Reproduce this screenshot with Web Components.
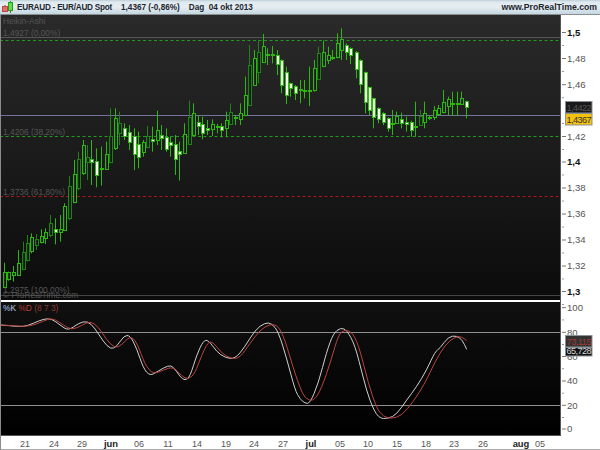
<!DOCTYPE html>
<html>
<head>
<meta charset="utf-8">
<title>EURAUD</title>
<style>
html, body { margin: 0; padding: 0; background: #fff; }
</style>
</head>
<body>
<chart-window></chart-window>
<script>
const SVGNS = 'http://www.w3.org/2000/svg';
const FONT = '"Liberation Sans", Arial, sans-serif';

// [x, wickTop, bodyTop, bodyBottom, wickBottom, kind] in units of 1/3 px
// kind: 0 hollow, 1 white, 2 dim hollow
const CANDLES = [
  [12,788,815,860,862,0],[26,815,817,838,842,0],[39,798,817,826,845,0],[54,750,788,823,825,0],
  [69,725,755,805,808,2],[82,705,730,780,785,2],[95,700,712,755,760,0],[108,702,718,735,750,2],
  [123,688,707,725,730,0],[137,685,697,715,732,0],[152,645,670,707,712,2],[165,655,688,698,733,1],
  [180,645,687,695,725,0],[192,610,618,690,692,0],[207,528,558,655,660,2],[222,480,522,607,610,0],
  [234,455,478,565,570,2],[249,420,435,520,525,0],[262,435,470,485,540,2],[275,420,478,488,555,1],
  [289,445,482,525,562,1],[304,440,505,508,557,0],[318,425,462,508,510,0],[332,325,408,485,490,2],
  [345,325,355,445,450,0],[358,335,370,400,435,2],[372,370,385,408,420,1],[387,375,395,425,450,1],
  [402,385,408,462,510,1],[415,395,432,472,505,1],[429,420,425,455,470,0],[441,378,408,440,445,2],
  [456,380,418,425,455,1],[471,332,390,420,435,0],[485,375,405,415,450,1],[498,385,410,445,455,1],
  [512,410,427,437,470,1],[525,405,432,478,525,1],[538,425,453,463,542,1],[553,370,403,460,462,0],
  [567,302,350,430,432,2],[581,310,340,405,408,0],[595,345,365,378,405,1],[608,350,372,400,418,1],
  [622,360,385,390,405,1],[637,358,372,388,408,0],[651,372,378,382,400,1],[665,370,378,390,412,1],
  [678,335,360,385,412,0],[692,310,335,372,375,2],[706,345,350,354,375,1],[720,310,338,355,375,0],
  [735,230,285,345,348,0],[749,135,195,315,318,2],[763,150,175,255,258,0],[775,120,155,215,250,2],
  [789,102,138,185,187,0],[803,145,161,164,195,1],[817,138,162,165,190,0],[831,150,165,192,225,1],
  [845,178,180,255,280,1],[858,200,215,285,312,1],[872,248,250,265,290,1],[886,255,258,278,300,1],
  [900,240,268,272,310,1],[914,240,271,273,295,0],[928,200,270,272,318,0],[942,180,205,272,275,0],
  [955,140,160,238,240,2],[969,122,157,200,202,0],[984,140,165,180,192,0],[997,150,171,174,180,0],
  [1011,100,130,172,175,0],[1025,85,118,152,180,0],[1038,130,135,155,180,1],[1052,142,145,165,192,1],
  [1068,153,155,207,235,1],[1081,178,180,252,280,1],[1095,215,217,307,340,1],[1108,260,262,332,345,1],
  [1121,293,295,352,385,1],[1135,322,325,357,370,1],[1150,337,340,368,375,1],[1164,352,355,385,395,1],
  [1178,330,368,372,405,0],[1190,335,347,368,370,0],[1204,338,357,368,385,1],[1218,350,365,370,395,1],
  [1233,362,365,388,410,1],[1247,305,377,379,410,0],[1260,330,348,375,377,2],[1274,305,338,365,385,0],
  [1288,348,350,352,360,0],[1302,318,330,352,360,0],[1316,315,325,342,345,0],[1330,270,305,335,340,0],
  [1344,290,298,320,345,0],[1358,275,309,311,348,0],[1372,275,310,314,348,1],[1385,275,295,312,314,0],
  [1400,302,304,322,355,1]
];

// oscillator points, x and y in 1/3 px from (0, 295)
const K_LINE = [[0,90],[30,92],[70,96],[100,85],[130,72],[155,71],[180,90],[205,107],[235,85],[262,77],[285,100],[310,140],[332,163],[350,155],[372,122],[390,121],[410,160],[430,220],[450,243],[475,228],[505,211],[520,215],[540,245],[555,257],[570,245],[590,180],[610,137],[625,135],[650,170],[675,188],[705,192],[735,155],[765,105],[795,83],[815,85],[835,110],[860,190],[885,285],[900,312],[915,325],[930,325],[955,265],[980,170],[1000,115],[1022,98],[1040,105],[1065,150],[1090,250],[1110,320],[1135,370],[1165,371],[1190,358],[1220,315],[1250,275],[1280,225],[1305,170],[1320,160],[1345,125],[1370,122],[1387,135],[1400,163]];
const D_LINE = [[0,90],[40,92],[75,95],[110,88],[145,71],[165,73],[190,90],[215,105],[245,92],[270,78],[295,95],[320,135],[345,160],[365,150],[390,123],[410,140],[435,210],[460,238],[490,225],[520,215],[545,243],[565,254],[585,235],[605,180],[625,140],[640,142],[665,175],[695,192],[720,188],[750,145],[780,105],[810,87],[835,92],[855,135],[880,220],[900,278],[915,310],[940,320],[965,280],[995,190],[1015,120],[1035,102],[1060,115],[1080,165],[1105,265],[1130,340],[1150,365],[1175,371],[1205,362],[1240,320],[1275,265],[1305,200],[1335,150],[1365,125],[1385,125],[1400,137]];

function el(parent, name, attrs, text) {
  const n = document.createElementNS(SVGNS, name);
  for (const k in attrs) n.setAttribute(k, attrs[k]);
  if (text !== undefined) n.textContent = text;
  parent.appendChild(n);
  return n;
}

class TitleBar extends HTMLElement {
  constructor() {
    super();
    this.attachShadow({mode: 'open'}).innerHTML = `
<style>
:host {
  display: flex;
  align-items: center;
  height: 15px;
  box-sizing: border-box;
  padding: 0 3px 0 2px;
  border-bottom: 1px solid #8a8f92;
  background: linear-gradient(#bccfda 0, #dfe9ee 2px, #e6eef2 7px, #c4d6e0 14px);
  font: bold 8.2px ${FONT};
  color: #1c2630;
  white-space: pre;
}
svg { flex: none; margin-right: 3px; }
.name { letter-spacing: -.24px; }
.quote { margin-left: 9px; }
.date { margin-left: 9px; }
.site { margin-left: auto; font-size: 8.7px; }
</style>
<svg width="12" height="12" viewBox="0 0 12 12">
  <path d="M3 4V11" stroke="#a33" stroke-width="1"/>
  <rect x=".5" y="5.5" width="5" height="5" fill="#e0706c" stroke="#b44"/>
  <path d="M8.5 0V12" stroke="#2a8a20" stroke-width="1"/>
  <rect x="6.5" y="1.5" width="4" height="8" fill="#5fe04a" stroke="#2a9a20"/>
</svg>
<span class="name"><slot name="name"></slot></span>
<span class="quote"><slot name="quote"></slot></span>
<span class="date"><slot name="date"></slot></span>
<span class="site"><slot name="site"></slot></span>`;
  }
}
customElements.define('title-bar', TitleBar);

class PricePanel extends HTMLElement {
  constructor() {
    super();
    this.attachShadow({mode: 'open'}).innerHTML = `
<style>
:host { display: block; height: 285px; overflow: hidden; border-left: 1px solid #8b8b8b; box-sizing: border-box; background: linear-gradient(#2a2a2a, #0b0b0b); }
svg { display: block; }
text { font: 8.4px ${FONT}; fill: #555; }
</style>
<svg width="560" height="285" viewBox="0 0 560 285"></svg>`;
  }
  connectedCallback() {
    const svg = this.shadowRoot.querySelector('svg');
    const g = el(svg, 'g', {transform: 'translate(-1,-15)'});
    el(g, 'line', {x1: 0, x2: 561, y1: 37.5, y2: 37.5, stroke: '#555', 'stroke-width': 1});
    el(g, 'line', {x1: 0, x2: 561, y1: 295.5, y2: 295.5, stroke: '#444', 'stroke-width': 1});
    for (const [y, c] of [[40.5, '#1f9a1f'], [136.5, '#1f9a1f'], [196.5, '#a81818']]) {
      el(g, 'line', {x1: 0, x2: 561, y1: y, y2: y, stroke: c, 'stroke-width': 1, 'stroke-dasharray': '3 2.5'});
    }
    el(g, 'line', {x1: 0, x2: 561, y1: 115.5, y2: 115.5, stroke: '#72729a', 'stroke-width': 1});
    el(g, 'text', {x: 3, y: 24}, 'Heikin-Ashi');
    el(g, 'text', {x: 3, y: 36}, '1,4927 (0,00%)');
    el(g, 'text', {x: 3, y: 135}, '1,4206 (38,20%)');
    el(g, 'text', {x: 3, y: 195}, '1,3736 (61,80%)');
    el(g, 'text', {x: 3, y: 293}, '1,2975 (100,00%)');
    el(g, 'text', {x: 3, y: 298}, '© ProRealTime.com');
    for (const [x, wt, bt, bb, wb, kind] of CANDLES) {
      const n = Math.round(x / 3 - .5);
      const color = kind === 2 ? '#1f8214' : '#2cb80c';
      const top = Math.round(bt / 3) + .5;
      const h = Math.max(Math.round((bb - bt) / 3), 1);
      el(g, 'line', {x1: n + .5, x2: n + .5, y1: wt / 3, y2: wb / 3, stroke: color, 'stroke-width': 1});
      el(g, 'rect', {
        x: n - .5, y: top, width: 3, height: h,
        fill: kind === 1 ? '#f4ffec' : '#141614', 'fill-opacity': kind === 1 ? 1 : .8,
        stroke: color, 'stroke-width': 1
      });
    }
  }
}
customElements.define('price-panel', PricePanel);

function smooth(points) {
  const p = points.map(([x, y]) => [x / 3, 295 + y / 3]);
  let d = `M${p[0][0]} ${p[0][1]}`;
  for (let i = 1; i < p.length - 1; i++) {
    const mx = (p[i][0] + p[i + 1][0]) / 2, my = (p[i][1] + p[i + 1][1]) / 2;
    d += `Q${p[i][0]} ${p[i][1]} ${mx} ${my}`;
  }
  const last = p[p.length - 1];
  return d + `L${last[0]} ${last[1]}`;
}

class OscPanel extends HTMLElement {
  constructor() {
    super();
    this.attachShadow({mode: 'open'}).innerHTML = `
<style>
:host { display: block; height: 133px; overflow: hidden; border-left: 1px solid #8b8b8b; box-sizing: border-box; background: linear-gradient(#101010, #000); }
svg { display: block; }
text { font: 8.4px ${FONT}; }
</style>
<svg width="560" height="133" viewBox="0 0 560 133"></svg>`;
  }
  connectedCallback() {
    const svg = this.shadowRoot.querySelector('svg');
    const g = el(svg, 'g', {transform: 'translate(-1,-302)'});
    for (const y of [332.5, 405.5]) {
      el(g, 'line', {x1: 0, x2: 561, y1: y, y2: y, stroke: '#8f8f8f', 'stroke-width': 1});
    }
    const t = el(g, 'text', {x: 3, y: 310.5});
    el(t, 'tspan', {fill: '#b9c8e8'}, '%K ');
    el(t, 'tspan', {fill: '#b03c36'}, '%D');
    el(t, 'tspan', {fill: '#8a3a36'}, ' (8 7 3)');
    el(g, 'path', {d: smooth(K_LINE), fill: 'none', stroke: '#cfcfcf', 'stroke-width': 1});
    el(g, 'path', {d: smooth(D_LINE), fill: 'none', stroke: '#b8443c', 'stroke-width': 1});
  }
}
customElements.define('osc-panel', OscPanel);

class RightAxis extends HTMLElement {
  constructor() {
    super();
    this.attachShadow({mode: 'open'}).innerHTML = `
<style>
:host { display: block; background: #fff; border-left: 1px solid #555; box-sizing: border-box; height: 420px; }
svg { display: block; }
text { font: 9.6px ${FONT}; fill: #555; }
.b { font-weight: bold; fill: #111; }
</style>
<svg width="40" height="420" viewBox="0 0 40 420"></svg>`;
  }
  connectedCallback() {
    const svg = this.shadowRoot.querySelector('svg');
    const g = el(svg, 'g', {transform: 'translate(-560,-15)'});
    const label = (y, s, bold) => {
      el(g, 'line', {x1: 561, x2: 565, y1: y, y2: y, stroke: '#777'});
      el(g, 'text', {x: 566, y: y + 3.4, class: bold ? 'b' : ''}, s);
    };
    const prices = [[32.5, '1,5', 1], [58.5, '1,48'], [84.7, '1,46'], [110.5, ''], [136.5, '1,42'], [162, '1,4', 1], [188, '1,38'], [214, '1,36'], [240, '1,34'], [266, '1,32'], [291.5, '1,3', 1]];
    for (const [y, s, b] of prices) {
      if (s) label(y, s, b);
      el(g, 'line', {x1: 561, x2: 563, y1: y + 13, y2: y + 13, stroke: '#999'});
    }
    for (const [y, s] of [[307.7, '100'], [332.3, '80'], [356.5, '60'], [381, '40'], [405.3, '20'], [429, '0']]) {
      label(y, s);
      if (y < 420) el(g, 'line', {x1: 561, x2: 563, y1: y + 12.2, y2: y + 12.2, stroke: '#999'});
    }
    const badge = (y, h, bg, fg, s) => {
      el(g, 'rect', {x: 564.5, y: y + .5, width: 26.5, height: h, fill: bg, stroke: '#8a9298'});
      const t = el(g, 'text', {x: 565.5, y: y + h - 2, style: `fill:${fg};font-size:9.2px`}, s);
      t.setAttribute('textLength', 25);
    };
    badge(101, 11.5, '#1a1a1a', '#555', '1,4422');
    badge(113, 11.5, '#f4c20d', '#333', '1,4367');
    badge(335, 11.5, '#333', '#a33a34', '73,115');
    badge(347, 8.5, '#111', '#d8d8d8', '65,728');
  }
}
customElements.define('right-axis', RightAxis);

class TimeAxis extends HTMLElement {
  constructor() {
    super();
    this.attachShadow({mode: 'open'}).innerHTML = `
<style>
:host { display: block; grid-column: 1 / 3; height: 15px; background: #fff; border-left: 1px solid #8b8b8b; border-bottom: 1px solid #aaa; box-sizing: border-box; }
svg { display: block; }
text { font: 9px ${FONT}; fill: #555; text-anchor: middle; }
.b { font-weight: bold; fill: #222; font-size: 9.4px; }
</style>
<svg width="600" height="14" viewBox="0 0 600 14"></svg>`;
  }
  connectedCallback() {
    const svg = this.shadowRoot.querySelector('svg');
    el(svg, 'line', {x1: 0, x2: 560, y1: .5, y2: .5, stroke: '#555'});
    const labels = [[25, '21'], [54, '24'], [82, '29'], [111, 'jun', 1], [139, '06'], [168, '11'], [197, '14'], [226, '19'], [254, '24'], [283, '27'], [311, 'jul', 1], [340, '05'], [368, '10'], [397, '15'], [426, '18'], [454, '23'], [483, '26'], [521, 'aug', 1], [540, '05']];
    for (const [x, s, b] of labels) {
      el(svg, 'text', {x: x - 1, y: 11.5, class: b ? 'b' : ''}, s);
    }
  }
}
customElements.define('time-axis', TimeAxis);

class ChartWindow extends HTMLElement {
  constructor() {
    super();
    this.attachShadow({mode: 'open'}).innerHTML = `
<style>
:host { display: block; width: 600px; height: 450px; overflow: hidden; background: #fff; }
.body { display: grid; grid-template-columns: 560px 40px; grid-template-rows: 420px 15px; }
.panels { display: flex; flex-direction: column; height: 420px; }
.sep { height: 2px; background: #fff; border-left: 1px solid #8b8b8b; }
</style>
<title-bar>
  <span slot="name">EURAUD - EUR/AUD Spot</span>
  <span slot="quote">1,4367 (-0,86%)</span>
  <span slot="date">Dag  04 okt 2013</span>
  <span slot="site">www.ProRealTime.com</span>
</title-bar>
<div class="body">
  <div class="panels">
    <price-panel></price-panel>
    <div class="sep"></div>
    <osc-panel></osc-panel>
  </div>
  <right-axis></right-axis>
  <time-axis></time-axis>
</div>`;
  }
}
customElements.define('chart-window', ChartWindow);
</script>
</body>
</html>
